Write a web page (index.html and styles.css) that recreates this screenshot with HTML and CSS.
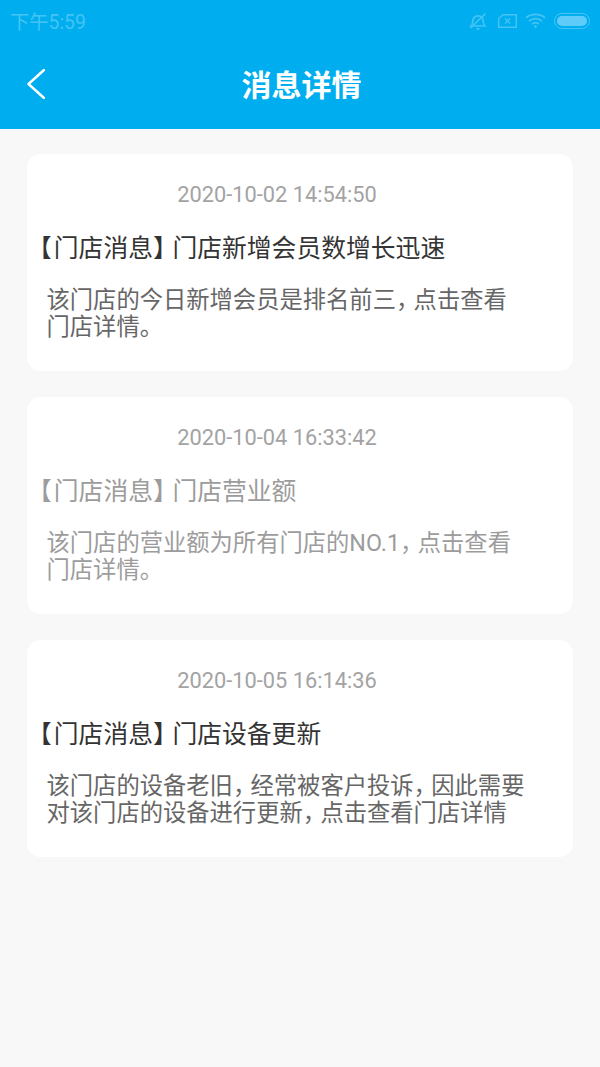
FILE: index.html
```html
<!DOCTYPE html>
<html lang="zh-CN">
<head>
  <meta charset="UTF-8">
  <title>消息详情</title>
  <link rel="stylesheet" href="styles.css">
</head>
<body>

  <header class="top">
    <div class="status">
      <span class="time">下午5:59</span>
      <div class="status-icons">
        <svg class="ico-bell" width="18" height="18" viewBox="0 0 18 18" fill="none" stroke="currentColor" stroke-width="1.700">
          <path d="M2 14h14c-1.300-1.200-1.800-2.500-1.800-4.800 0-3-2-5.400-5.200-5.400S3.800 6.200 3.800 9.200C3.800 11.500 3.300 12.800 2 14z"/>
          <path d="M7.500 16.800h3M1.500 16L16.500 1.500"/>
        </svg>
        <svg class="ico-sim" width="19" height="14" viewBox="0 0 19 14" fill="none" stroke="currentColor" stroke-width="1.400">
          <path d="M5 .7h13.300v12.600H.7V4.500z"/>
          <path d="M7 4.500l5 5M12 4.500l-5 5"/>
        </svg>
        <svg class="ico-wifi" width="21" height="15" viewBox="0 0 21 15" fill="none" stroke="currentColor" stroke-width="1.800">
          <path d="M1 4.800c5.300-4.700 13.700-4.700 19 0M4 8c3.700-3.100 9.300-3.100 13 0M7 11c2-1.500 5-1.500 7 0"/>
          <circle cx="10.500" cy="13.600" r="1.300" fill="currentColor" stroke="none"/>
        </svg>
        <div class="battery"><div class="battery-fill"></div></div>
      </div>
    </div>
    <div class="bar">
      <svg class="back" width="18" height="30" viewBox="0 0 18 30" fill="none" stroke="#fff" stroke-width="2.400" stroke-linecap="round" stroke-linejoin="round">
        <path d="M17 1L1.500 15 17 29"/>
      </svg>
      <h1>消息详情</h1>
    </div>
  </header>

  <main class="list">
    <section class="card">
      <p class="date">2020-10-02 14:54:50</p>
      <h3><span class="lb">【</span>门店消息<span class="rb">】</span>门店新增会员数增长迅速</h3>
      <div class="text">
        <div>该门店的今日新增会员是排名前三<span class="comma">，</span>点击查看</div>
        <div>门店详情。</div>
      </div>
    </section>
    <section class="card read">
      <p class="date">2020-10-04 16:33:42</p>
      <h3><span class="lb">【</span>门店消息<span class="rb">】</span>门店营业额</h3>
      <div class="text">
        <div>该门店的营业额为所有门店的NO.1<span class="comma">，</span>点击查看</div>
        <div>门店详情。</div>
      </div>
    </section>
    <section class="card">
      <p class="date">2020-10-05 16:14:36</p>
      <h3><span class="lb">【</span>门店消息<span class="rb">】</span>门店设备更新</h3>
      <div class="text">
        <div>该门店的设备老旧<span class="comma">，</span>经常被客户投诉<span class="comma">，</span>因此需要</div>
        <div>对该门店的设备进行更新<span class="comma">，</span>点击查看门店详情</div>
      </div>
    </section>
  </main>

</body>
</html>
```

FILE: styles.css
```css
* {
  box-sizing: border-box;
}

body {
  margin: 0;
  height: 1067px;
  overflow: hidden;
  background: #f8f8f8;
  font-family: Roboto, "Noto Sans CJK SC", sans-serif;
  color: #333;
}

.top {
  height: 129px;
  background: #00aeef;
  color: #fff;
}

.status {
  display: flex;
  justify-content: space-between;
  align-items: center;
  height: 41px;
  padding: 0 10px;
  color: #45c3f5;
}

.time {
  font-size: 19.300px;
}

.status-icons {
  display: flex;
  align-items: center;
}

.ico-sim {
  margin-left: 11px;
}

.ico-wifi {
  margin-left: 8px;
}

.battery {
  width: 36px;
  height: 16px;
  margin-left: 8px;
  padding: 2px;
  border: 1.500px solid #45c3f5;
  border-radius: 8px;
}

.battery-fill {
  height: 100%;
  background: #5fcbf8;
  border-radius: 5px;
}

.bar {
  position: relative;
  height: 88px;
  display: flex;
  align-items: center;
  justify-content: center;
  padding: 0 0 4px 3px;
}

.back {
  position: absolute;
  left: 27px;
  top: 28px;
}

.bar h1 {
  margin: 0;
  font-size: 30px;
  font-weight: 700;
}

.list {
  display: flex;
  flex-direction: column;
  gap: 26px;
  padding: 25px 27px 0;
}

.card {
  height: 217px;
  padding: 27px 0 0;
  background: #fff;
  border-radius: 14px;
}

.date {
  margin: 0;
  padding-right: 46px;
  text-align: center;
  font-size: 21.800px;
  line-height: 28px;
  color: #a3a3a3;
}

.card h3 {
  margin: 25px 0 0;
  font-size: 24.800px;
  line-height: 30px;
  font-weight: 400;
  color: #333;
}

.lb {
  margin-right: 2px;
}

/* half width glyph plus a gap, the phone's font sets these tighter */
.rb {
  font-feature-settings: "halt";
  margin-right: 7px;
}

.text {
  margin: 23px 0 0 19.500px;
  font-size: 23.300px;
  line-height: 27px;
  color: #666;
}

.comma {
  font-feature-settings: "halt";
  margin-right: 6px;
}

.read h3,
.read .text {
  color: #9c9c9c;
}
```
